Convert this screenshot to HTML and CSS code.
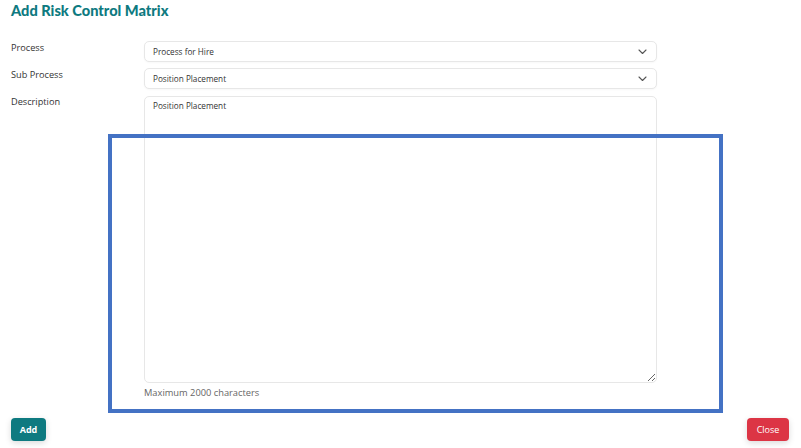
FILE: index.html
```html
<!DOCTYPE html>
<html lang="en">
<head>
<meta charset="utf-8">
<title>Add Risk Control Matrix</title>
<link rel="stylesheet" href="styles.css">
</head>
<body>
<div class="modal">
  <h1 class="title">Add Risk Control Matrix</h1>
  <form class="form">
    <label class="label" for="process">Process</label>
    <div class="select-wrap">
      <select id="process" class="select"><option>Process for Hire</option></select>
      <svg class="chev" width="9" height="6" viewBox="0 0 9 6"><path d="M1 1l3.5 3.5L8 1" fill="none" stroke="#555" stroke-width="1.1" stroke-linecap="round" stroke-linejoin="round"/></svg>
    </div>
    <label class="label" for="sub">Sub Process</label>
    <div class="select-wrap">
      <select id="sub" class="select"><option>Position Placement</option></select>
      <svg class="chev" width="9" height="6" viewBox="0 0 9 6"><path d="M1 1l3.5 3.5L8 1" fill="none" stroke="#555" stroke-width="1.1" stroke-linecap="round" stroke-linejoin="round"/></svg>
    </div>
    <label class="label" for="desc">Description</label>
    <div class="desc-wrap">
      <textarea id="desc" class="textarea">Position Placement</textarea>
      <div class="hint">Maximum 2000 characters</div>
    </div>
  </form>
  <div class="footer">
    <button class="btn btn-add" type="button">Add</button>
    <button class="btn btn-close" type="button">Close</button>
  </div>
</div>
<div class="highlight"></div>
</body>
</html>
```
FILE: styles.css
```css
* { box-sizing: border-box; }
html, body { margin: 0; padding: 0; background: #fff; }
body {
  font-family: "Open Sans", "Noto Sans", sans-serif;
  color: #333;
  width: 801px;
  height: 448px;
  overflow: hidden;
  position: relative;
}
.modal { padding: 1px 11px 0 11px; }
.title {
  margin: 0;
  font-family: Lato, "Open Sans", sans-serif;
  font-size: 14.6px;
  font-weight: 900;
  color: #0e7a80;
  line-height: 20px;
}
.form {
  margin-top: 20px;
  display: grid;
  grid-template-columns: 133px 513px;
  row-gap: 6px;
}
.label {
  font-size: 9.2px;
  color: #333;
  line-height: 13px;
}
.select-wrap { position: relative; }
.select {
  display: block;
  width: 100%;
  height: 21px;
  appearance: none;
  -webkit-appearance: none;
  border: 1px solid #e7e7e7;
  border-radius: 5px;
  background: #fff;
  font-family: inherit;
  font-size: 8.2px;
  color: #333;
  padding: 0 8px;
  box-shadow: 0 1px 2px rgba(0,0,0,0.03);
}
.chev { position: absolute; right: 10px; top: 8px; }
.desc-wrap { display: flex; flex-direction: column; }
.textarea {
  display: block;
  width: 100%;
  height: 287px;
  border: 1px solid #e7e7e7;
  border-radius: 5px;
  font-family: inherit;
  font-size: 8.2px;
  color: #333;
  padding: 3px 8px;
  resize: vertical;
  margin: 1px 0 0 0;
}
.hint {
  font-size: 9.3px;
  color: #666;
  margin-top: 3px;
  line-height: 14px;
}
.footer {
  display: flex;
  justify-content: space-between;
  margin-top: 18px;
  padding-right: 1px;
}
.btn {
  border: none;
  border-radius: 4px;
  height: 23px;
  font-family: inherit;
  font-size: 9px;
  font-weight: 600;
  color: #fff;
  padding: 0;
  box-shadow: 0 2px 6px rgba(0,0,0,0.15);
}
.btn-add { background: #0e7a80; width: 35px; font-weight: 700; }
.btn-close { background: #dc3545; width: 42px; font-weight: 500; }
.highlight {
  position: absolute;
  left: 108px;
  top: 134px;
  width: 615px;
  height: 279px;
  border: 4px solid #4472c4;
  pointer-events: none;
}
```
